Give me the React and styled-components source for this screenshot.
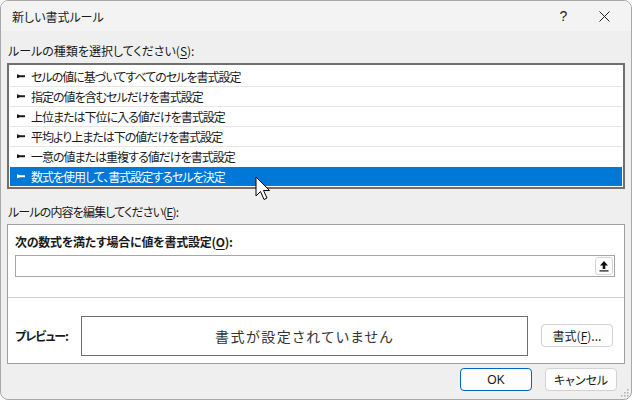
import styled, { createGlobalStyle } from "styled-components";

const GlobalStyle = createGlobalStyle`
  html, body {
    margin: 0;
    padding: 0;
    background: #ffffff;
  }
  body {
    font-family: "Noto Sans CJK JP", "Noto Sans", sans-serif;
    font-size: 12px;
    color: #1a1a1a;
    font-feature-settings: "palt";
  }
`;

const Window = styled.div`
  position: relative;
  width: 632px;
  height: 400px;
  box-sizing: border-box;
  border: 1px solid #a8a8a8;
  border-radius: 8px;
  background: #efefef;
  overflow: hidden;
  display: flex;
  flex-direction: column;
`;

const TitleBar = styled.div`
  height: 30px;
  display: flex;
  align-items: center;
  padding: 0 6px 0 11px;
  background: #f3f3f3;
  flex-shrink: 0;
`;

const Title = styled.div`
  flex: 1;
  font-size: 12px;
`;

const TitleButton = styled.div`
  width: 41px;
  height: 30px;
  display: flex;
  align-items: center;
  justify-content: center;
  font-family: "Liberation Sans", sans-serif;
  font-size: 14px;
  color: #222;
`;

const Body = styled.div`
  flex: 1;
  display: flex;
  flex-direction: column;
  padding: 12px 6px 0 6px;
`;

const Label = styled.div`
  font-size: 12px;
  line-height: 16px;
  margin-left: 1px;
  margin-bottom: 4px;
  letter-spacing: ${(p) => p.$ls || 0}px;
  u {
    text-underline-offset: 2px;
  }
`;

const ListBox = styled.div`
  background: #ffffff;
  border: 2px solid #6f6f6f;
  padding: 1px;
  display: flex;
  flex-direction: column;
  margin-bottom: 15px;
`;

const Row = styled.div`
  height: 19px;
  display: flex;
  align-items: center;
  gap: 5px;
  padding-left: 7px;
  font-size: 12px;
  letter-spacing: -1px;
  background: ${(p) => (p.$selected ? "#0078d7" : "#ffffff")};
  color: ${(p) => (p.$selected ? "#ffffff" : "#1a1a1a")};
  border-top: 1px solid ${(p) => (p.$first ? "transparent" : "#e6e6e6")};
  &:last-child {
    border-top-color: #ffffff;
  }
`;

const Panel = styled.div`
  background: #ffffff;
  border: 1px solid #a0a0a0;
  display: flex;
  flex-direction: column;
  height: 140px;
  box-sizing: border-box;
`;

const FormulaSection = styled.div`
  padding: 9px 9px 0 7px;
  height: 73px;
  box-sizing: border-box;
  border-bottom: 1px solid #cfcfcf;
`;

const BoldLabel = styled.div`
  font-weight: bold;
  font-size: 12px;
  line-height: 16px;
  letter-spacing: -0.25px;
  margin-bottom: 5px;
  u {
    text-underline-offset: 2px;
  }
`;

const InputBox = styled.div`
  height: 22px;
  box-sizing: border-box;
  border: 1px solid #a6a6a6;
  display: flex;
  justify-content: flex-end;
  align-items: center;
  padding-right: 1px;
`;

const RefButton = styled.div`
  width: 18px;
  height: 18px;
  box-sizing: border-box;
  border: 1px solid #d6d6d6;
  border-radius: 3px;
  background: #fdfdfd;
  display: flex;
  align-items: center;
  justify-content: center;
`;

const PreviewSection = styled.div`
  flex: 1;
  display: flex;
  align-items: center;
  padding: 10px 0 0 7px;
`;

const PreviewLabel = styled.div`
  font-weight: bold;
  width: 66px;
  font-size: 12px;
  letter-spacing: -1px;
`;

const PreviewBox = styled.div`
  width: 447px;
  height: 40px;
  box-sizing: border-box;
  border: 1px solid #6e6e6e;
  display: flex;
  align-items: center;
  justify-content: center;
  font-size: 14px;
  letter-spacing: 1.5px;
  color: #333;
`;

const Button = styled.div`
  height: 23px;
  box-sizing: border-box;
  border: 1px solid ${(p) => (p.$primary ? "#0067c0" : "#d2d2d2")};
  border-radius: 4px;
  background: #fdfdfd;
  display: flex;
  align-items: center;
  justify-content: center;
  font-size: 12px;
  width: ${(p) => p.$w}px;
  margin-left: ${(p) => p.$ml || 0}px;
  font-family: ${(p) =>
    p.$latin ? '"Liberation Sans", sans-serif' : "inherit"};
  u {
    text-underline-offset: 2px;
  }
`;

const Footer = styled.div`
  display: flex;
  justify-content: flex-end;
  padding: 4px 8px 0 0;
  gap: 13px;
`;

const Cursor = styled.svg`
  position: absolute;
  left: 254px;
  top: 175px;
`;

const Grip = styled.svg`
  position: absolute;
  right: 2px;
  bottom: 2px;
`;

const Bullet = () => (
  <svg width="9" height="5" viewBox="0 0 9 5">
    <polygon points="0,0.3 3,1.3 8,1.3 8,3.2 3,3.2 0,4.2" fill="currentColor" />
  </svg>
);

const items = [
  "セルの値に基づいてすべてのセルを書式設定",
  "指定の値を含むセルだけを書式設定",
  "上位または下位に入る値だけを書式設定",
  "平均より上または下の値だけを書式設定",
  "一意の値または重複する値だけを書式設定",
  "数式を使用して、書式設定するセルを決定",
];

export default function App() {
  return (
    <>
      <GlobalStyle />
      <Window>
        <TitleBar>
          <Title>新しい書式ルール</Title>
          <TitleButton>?</TitleButton>
          <TitleButton>
            <svg width="11" height="11" viewBox="0 0 11 11">
              <path d="M0.5 0.5 L10.5 10.5 M10.5 0.5 L0.5 10.5" stroke="#222" strokeWidth="1" />
            </svg>
          </TitleButton>
        </TitleBar>
        <Body>
          <Label>
            ルールの種類を選択してください(<u>S</u>):
          </Label>
          <ListBox>
            {items.map((t, i) => (
              <Row key={t} $first={i === 0} $selected={i === items.length - 1}>
                <Bullet />
                {t}
              </Row>
            ))}
          </ListBox>
          <Label $ls={-0.85}>
            ルールの内容を編集してください(<u>E</u>):
          </Label>
          <Panel>
            <FormulaSection>
              <BoldLabel>
                次の数式を満たす場合に値を書式設定(<u>O</u>):
              </BoldLabel>
              <InputBox>
                <RefButton>
                  <svg width="10" height="12" viewBox="0 0 10 12">
                    <polygon points="5,1 9,5.5 6.3,5.5 6.3,9 3.7,9 3.7,5.5 1,5.5" fill="#111" />
                    <rect x="0.5" y="10.3" width="9" height="1.2" fill="#111" />
                  </svg>
                </RefButton>
              </InputBox>
            </FormulaSection>
            <PreviewSection>
              <PreviewLabel>プレビュー:</PreviewLabel>
              <PreviewBox>書式が設定されていません</PreviewBox>
              <Button $w={72} $ml={13}>
                書式(<u>F</u>)...
              </Button>
            </PreviewSection>
          </Panel>
          <Footer>
            <Button $primary $latin $w={72}>
              OK
            </Button>
            <Button $w={72}>キャンセル</Button>
          </Footer>
        </Body>
        <Cursor width="16" height="26" viewBox="0 0 16 26">
          <path
            d="M1 1 L1 20 L5.5 15.5 L9 23.5 L12 22 L8.5 14.5 L14.5 14.5 Z"
            fill="#ffffff"
            stroke="#000000"
            strokeWidth="1"
            strokeLinejoin="round"
          />
        </Cursor>
        <Grip width="8" height="8" viewBox="0 0 8 8">
          <g fill="#b0b0b0">
            <rect x="6" y="0" width="1.5" height="1.5" />
            <rect x="3" y="3" width="1.5" height="1.5" />
            <rect x="6" y="3" width="1.5" height="1.5" />
            <rect x="0" y="6" width="1.5" height="1.5" />
            <rect x="3" y="6" width="1.5" height="1.5" />
            <rect x="6" y="6" width="1.5" height="1.5" />
          </g>
        </Grip>
      </Window>
    </>
  );
}
